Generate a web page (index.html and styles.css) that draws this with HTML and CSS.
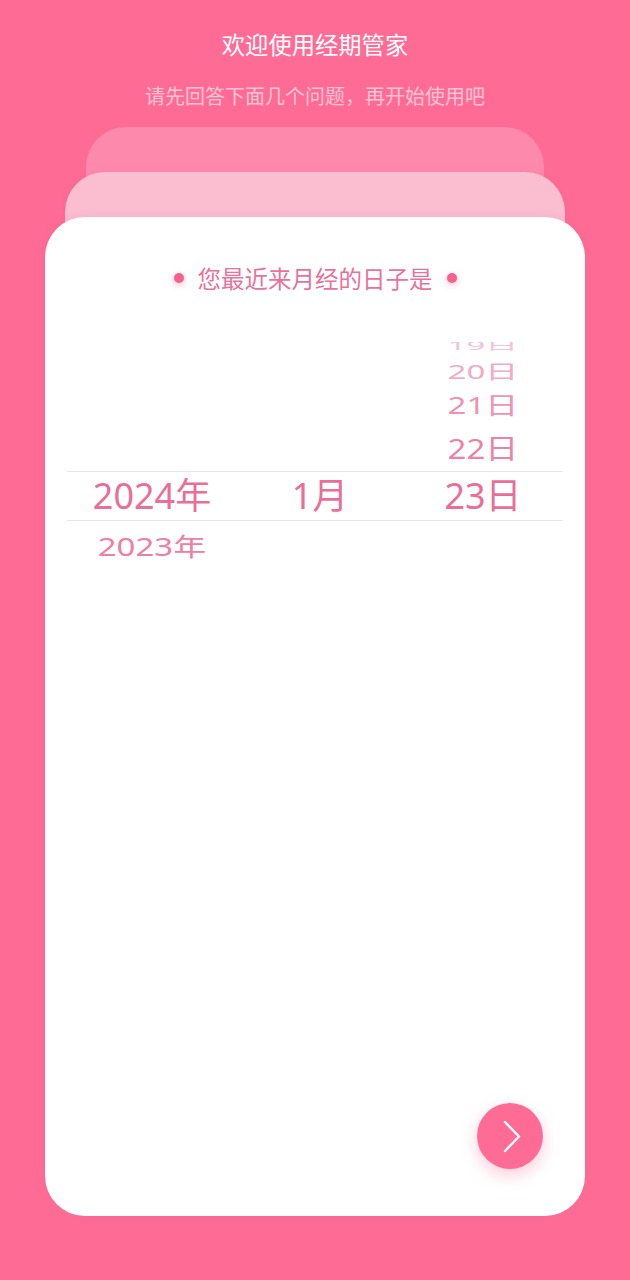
FILE: index.html
```html
<!DOCTYPE html>
<html lang="zh-CN">
<head>
<meta charset="utf-8">
<title>欢迎使用经期管家</title>
<link rel="stylesheet" href="styles.css">
</head>
<body>
<div class="page">
  <h1 class="title">欢迎使用经期管家</h1>
  <p class="subtitle">请先回答下面几个问题，再开始使用吧</p>
  <div class="stack">
    <div class="layer layer-back"></div>
    <div class="layer layer-mid"></div>
    <div class="card">
      <div class="heading">
        <span class="dot"></span>
        <span class="heading-text">您最近来月经的日子是</span>
        <span class="dot"></span>
      </div>
      <div class="picker">
        <div class="picker-top">
          <div class="col"></div>
          <div class="col"></div>
          <div class="col">
            <div class="item r4"><span>19日</span></div>
            <div class="item r3"><span>20日</span></div>
            <div class="item r2"><span>21日</span></div>
            <div class="item r1"><span>22日</span></div>
          </div>
        </div>
        <div class="picker-selected">
          <div class="sel">2024年</div>
          <div class="sel">1月</div>
          <div class="sel">23日</div>
        </div>
        <div class="picker-bottom">
          <div class="col">
            <div class="item b1"><span>2023年</span></div>
          </div>
          <div class="col"></div>
          <div class="col"></div>
        </div>
      </div>
      <button class="next" type="button" aria-label="下一步">
        <svg width="66" height="66" viewBox="0 0 66 66"><path d="M28 19 L42 33.5 L28 48" fill="none" stroke="#fff" stroke-width="2.4" stroke-linecap="round" stroke-linejoin="round"/></svg>
      </button>
    </div>
  </div>
</div>
</body>
</html>
```

FILE: styles.css
```css
* { box-sizing: border-box; }
html, body { margin: 0; padding: 0; }
body {
  background: #fe6c96;
  font-family: "Noto Sans", "Noto Sans CJK SC", sans-serif;
  width: 630px;
  height: 1280px;
  overflow: hidden;
}
.page {
  display: flex;
  flex-direction: column;
  padding-top: 28px;
}
.title {
  margin: 0;
  text-align: center;
  color: #ffffff;
  font-size: 23.3px;
  font-weight: 400;
  line-height: 32px;
  font-family: "Noto Sans CJK SC", sans-serif;
}
.subtitle {
  margin: 22px 0 0;
  text-align: center;
  color: rgba(255, 255, 255, 0.6);
  font-size: 20px;
  line-height: 28px;
  font-family: "Noto Sans CJK SC", sans-serif;
}
.stack {
  margin-top: 17px;
  display: flex;
  flex-direction: column;
}
.layer {
  height: 90px;
  margin-bottom: -45px;
  border-radius: 40px 40px 0 0;
}
.layer-back {
  margin-left: 86px;
  margin-right: 86px;
  background: #fd8aad;
}
.layer-mid {
  margin-left: 65px;
  margin-right: 65px;
  background: #fbbed1;
  box-shadow: 0 -2px 6px rgba(200, 60, 100, 0.08);
}
.card {
  margin: 0 45px;
  height: 999px;
  background: #ffffff;
  border-radius: 40px;
  box-shadow: 0 -3px 8px rgba(200, 60, 100, 0.08);
  display: flex;
  flex-direction: column;
  padding-top: 45px;
}
.heading {
  display: flex;
  justify-content: center;
  align-items: center;
  gap: 14px;
  height: 32px;
}
.heading-text {
  color: #e8729b;
  font-size: 23.5px;
  line-height: 32px;
  font-family: "Noto Sans CJK SC", sans-serif;
}
.dot {
  width: 10px;
  height: 10px;
  border-radius: 50%;
  background: #f3618f;
  box-shadow: 0 2px 6px rgba(243, 97, 143, 0.45);
}
.picker {
  margin: 48px 22px 0;
  display: flex;
  flex-direction: column;
}
.picker-top, .picker-bottom, .picker-selected {
  display: grid;
  grid-template-columns: 170px 166px 160px;
}
.picker-top {
  height: 129px;
  grid-template-rows: 129px;
  overflow: hidden;
}
.picker-bottom {
  grid-template-rows: 50px;
}
.col {
  display: flex;
  flex-direction: column;
  justify-content: flex-end;
  align-items: center;
  min-height: 0;
}
.picker-bottom .col { justify-content: flex-start; }
.item {
  display: flex;
  align-items: center;
  justify-content: center;
  flex: 0 0 auto;
  font-size: 33px;
  line-height: 1;
  white-space: nowrap;
}
.item span { display: inline-block; }
.r1 { height: 46px; color: #ec83a7; }
.r1 span { transform: scaleY(0.85); }
.r2 { height: 39px; color: #ee93b3; }
.r2 span { transform: scaleY(0.72); }
.r3 { height: 29px; color: #f1abc3; }
.r3 span { transform: scaleY(0.6); }
.r4 { height: 24px; color: #f4c4d5; }
.r4 span { transform: scaleY(0.36); }
.b1 { height: 50px; color: #ec80a5; }
.b1 span { transform: scaleY(0.76); }
.picker-selected {
  height: 50px;
  border-top: 1px solid #e6e6e6;
  border-bottom: 1px solid #e6e6e6;
}
.sel {
  display: flex;
  align-items: center;
  justify-content: center;
  color: #ea6e9a;
  font-size: 36px;
  line-height: 1;
  white-space: nowrap;
}
.next {
  margin-top: auto;
  margin-bottom: 47px;
  margin-right: 42px;
  align-self: flex-end;
  width: 66px;
  height: 66px;
  border: none;
  padding: 0;
  border-radius: 50%;
  background: #fe6c96;
  box-shadow: 0 6px 16px rgba(254, 108, 150, 0.35);
  display: flex;
  align-items: center;
  justify-content: center;
}
.next svg { display: block; }
```
